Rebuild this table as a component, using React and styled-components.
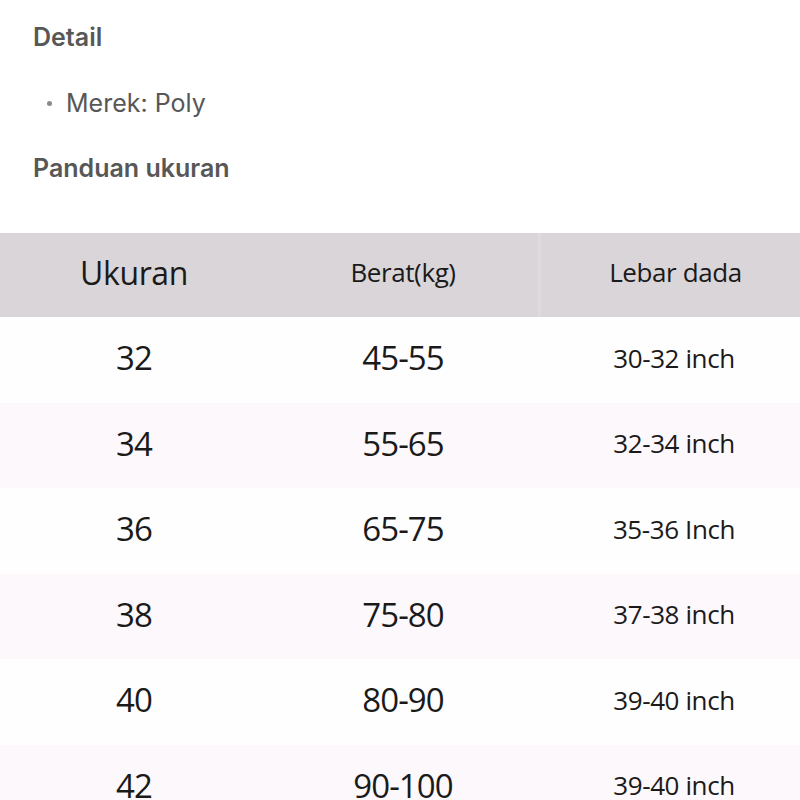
import React from 'react'
import styled, { createGlobalStyle } from 'styled-components'

const GlobalStyle = createGlobalStyle`
  html, body {
    margin: 0;
    padding: 0;
    background: #ffffff;
  }

  body {
    font-family: Inter, 'Noto Sans', 'Liberation Sans', sans-serif;
    overflow: hidden;
  }
`

const Page = styled.div`
  width: 800px;
  height: 800px;
  overflow: hidden;
  background: #ffffff;
`

const Info = styled.section`
  display: flex;
  flex-direction: column;
  padding: 22px 33px 0;
`

const Heading = styled.h3`
  margin: 0;
  font-size: 25px;
  line-height: 30px;
  font-weight: 600;
  color: #575757;
`

const List = styled.ul`
  display: flex;
  flex-direction: column;
  margin: 36px 0 35px;
  padding: 0;
  list-style: none;
`

const Item = styled.li`
  display: flex;
  align-items: center;
  gap: 14px;
  padding-left: 14px;
  font-size: 25px;
  line-height: 30px;
  color: #575757;

  &::before {
    content: '';
    width: 5px;
    height: 5px;
    border-radius: 50%;
    background: #8a8a8a;
  }
`

const Table = styled.div`
  display: grid;
  grid-template-columns: 268px 270px 272px;
  width: 810px;
  margin-top: 50px;
  font-family: 'Open Sans', 'Noto Sans', sans-serif;
  font-weight: 500;
  color: #1a1a1a;
`

const HeadCell = styled.div`
  display: flex;
  align-items: center;
  justify-content: center;
  height: 84px;
  padding-bottom: 6px;
  box-sizing: border-box;
  background: #d9d5d9;
  font-size: ${(p) => p.size}px;
  letter-spacing: -0.4px;
  border-left: ${(p) => (p.divider ? '3px solid #dedbde' : '0')};
`

const Cell = styled.div`
  display: flex;
  align-items: center;
  justify-content: center;
  height: 85.5px;
  background: ${(p) => (p.striped ? '#fcf8fb' : '#fefefe')};
  font-size: ${(p) => p.size}px;
  letter-spacing: ${(p) => (p.size > 30 ? '-0.9px' : '-0.4px')};
  padding-bottom: 4px;
  box-sizing: border-box;
`

const sizes = [
  ['32', '45-55', '30-32 inch'],
  ['34', '55-65', '32-34 inch'],
  ['36', '65-75', '35-36 Inch'],
  ['38', '75-80', '37-38 inch'],
  ['40', '80-90', '39-40 inch'],
  ['42', '90-100', '39-40 inch'],
]

const App = () => (
  <Page>
    <GlobalStyle />
    <Info>
      <Heading>Detail</Heading>
      <List>
        <Item>Merek: Poly</Item>
      </List>
      <Heading>Panduan ukuran</Heading>
    </Info>

    <Table>
      <HeadCell size={32}>Ukuran</HeadCell>
      <HeadCell size={26}>Berat(kg)</HeadCell>
      <HeadCell size={26} divider>
        Lebar dada
      </HeadCell>

      {sizes.map(([size, weight, chest], i) => (
        <React.Fragment key={size}>
          <Cell striped={i % 2 === 1} size={33}>
            {size}
          </Cell>
          <Cell striped={i % 2 === 1} size={33}>
            {weight}
          </Cell>
          <Cell striped={i % 2 === 1} size={26}>
            {chest}
          </Cell>
        </React.Fragment>
      ))}
    </Table>
  </Page>
)

export default App
